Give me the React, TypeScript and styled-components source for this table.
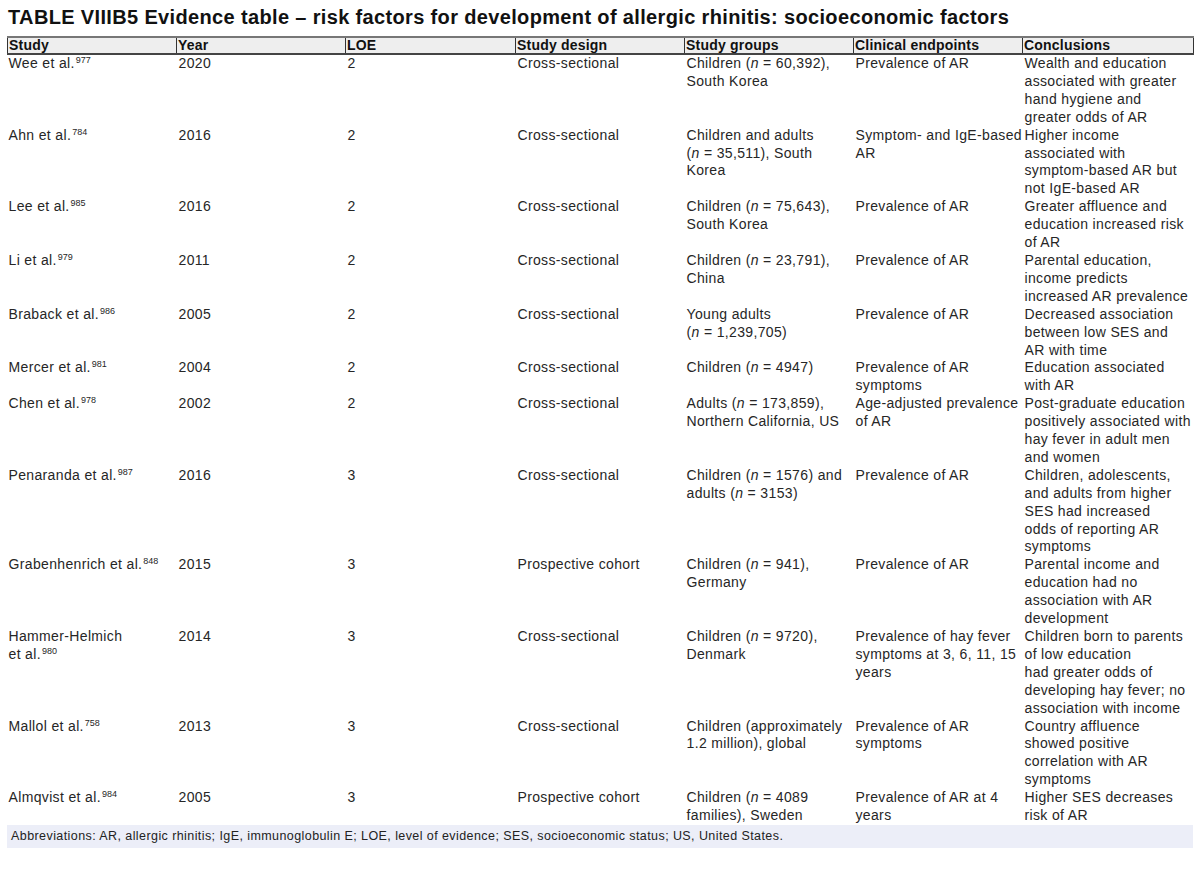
import React from "react";
import styled, { createGlobalStyle } from "styled-components";

const GlobalStyle = createGlobalStyle`
  html, body {
    margin: 0;
    padding: 0;
    background: #ffffff;
  }
  body {
    font-family: "Liberation Sans", Arial, sans-serif;
    color: #222222;
  }
`;

const Page = styled.div`
  width: 1200px;
  height: 872px;
  padding: 5px 7px 0 7px;
  box-sizing: border-box;
  display: flex;
  flex-direction: column;
`;

const Title = styled.h1`
  margin: 0 0 7px 1px;
  font-size: 20px;
  line-height: 24px;
  font-weight: bold;
  color: #111111;
  letter-spacing: 0.35px;
  white-space: nowrap;
`;

const Table = styled.table`
  width: 1186px;
  border-collapse: collapse;
  table-layout: fixed;
`;

const HeadCell = styled.th`
  background: #eeeeee;
  border-top: 2px solid #777777;
  border-bottom: 2px solid #444444;
  border-left: 1px solid #333333;
  border-right: 1px solid #333333;
  padding: 0 1px;
  height: 15px;
  font-size: 14px;
  line-height: 15px;
  font-weight: bold;
  text-align: left;
  color: #111111;
  letter-spacing: 0.2px;
  white-space: nowrap;
`;

const Cell = styled.td<{ $first?: boolean }>`
  vertical-align: top;
  padding: 0 1px 0 ${(p) => (p.$first ? "1px" : "2px")};
  font-size: 14px;
  line-height: 17.9px;
  color: #262626;
  letter-spacing: 0.35px;
  white-space: nowrap;
  overflow: visible;
`;

const Line = styled.div`
  white-space: nowrap;
`;

const Ref = styled.sup`
  font-size: 9px;
  line-height: 0;
  vertical-align: 5px;
  letter-spacing: 0;
  margin-left: 1px;
`;

const Footer = styled.div`
  width: 1186px;
  margin-top: 0;
  background: #eceef8;
  height: 23px;
  display: flex;
  align-items: center;
  padding-left: 4px;
  box-sizing: border-box;
  font-size: 12.5px;
  color: #222222;
  letter-spacing: 0.42px;
  white-space: nowrap;
`;

type Row = {
  study: string[];
  ref: string;
  year: string;
  loe: string;
  design: string;
  groups: string[];
  endpoints: string[];
  conclusions: string[];
};

const rows: Row[] = [
  {
    study: ["Wee et al."], ref: "977", year: "2020", loe: "2", design: "Cross-sectional",
    groups: ["Children (*n* = 60,392),", "South Korea"],
    endpoints: ["Prevalence of AR"],
    conclusions: ["Wealth and education", "associated with greater", "hand hygiene and", "greater odds of AR"],
  },
  {
    study: ["Ahn et al."], ref: "784", year: "2016", loe: "2", design: "Cross-sectional",
    groups: ["Children and adults", "(*n* = 35,511), South", "Korea"],
    endpoints: ["Symptom- and IgE-based", "AR"],
    conclusions: ["Higher income", "associated with", "symptom-based AR but", "not IgE-based AR"],
  },
  {
    study: ["Lee et al."], ref: "985", year: "2016", loe: "2", design: "Cross-sectional",
    groups: ["Children (*n* = 75,643),", "South Korea"],
    endpoints: ["Prevalence of AR"],
    conclusions: ["Greater affluence and", "education increased risk", "of AR"],
  },
  {
    study: ["Li et al."], ref: "979", year: "2011", loe: "2", design: "Cross-sectional",
    groups: ["Children (*n* = 23,791),", "China"],
    endpoints: ["Prevalence of AR"],
    conclusions: ["Parental education,", "income predicts", "increased AR prevalence"],
  },
  {
    study: ["Braback et al."], ref: "986", year: "2005", loe: "2", design: "Cross-sectional",
    groups: ["Young adults", "(*n* = 1,239,705)"],
    endpoints: ["Prevalence of AR"],
    conclusions: ["Decreased association", "between low SES and", "AR with time"],
  },
  {
    study: ["Mercer et al."], ref: "981", year: "2004", loe: "2", design: "Cross-sectional",
    groups: ["Children (*n* = 4947)"],
    endpoints: ["Prevalence of AR", "symptoms"],
    conclusions: ["Education associated", "with AR"],
  },
  {
    study: ["Chen et al."], ref: "978", year: "2002", loe: "2", design: "Cross-sectional",
    groups: ["Adults (*n* = 173,859),", "Northern California, US"],
    endpoints: ["Age-adjusted prevalence", "of AR"],
    conclusions: ["Post-graduate education", "positively associated with", "hay fever in adult men", "and women"],
  },
  {
    study: ["Penaranda et al."], ref: "987", year: "2016", loe: "3", design: "Cross-sectional",
    groups: ["Children (*n* = 1576) and", "adults (*n* = 3153)"],
    endpoints: ["Prevalence of AR"],
    conclusions: ["Children, adolescents,", "and adults from higher", "SES had increased", "odds of reporting AR", "symptoms"],
  },
  {
    study: ["Grabenhenrich et al."], ref: "848", year: "2015", loe: "3", design: "Prospective cohort",
    groups: ["Children (*n* = 941),", "Germany"],
    endpoints: ["Prevalence of AR"],
    conclusions: ["Parental income and", "education had no", "association with AR", "development"],
  },
  {
    study: ["Hammer-Helmich", "et al."], ref: "980", year: "2014", loe: "3", design: "Cross-sectional",
    groups: ["Children (*n* = 9720),", "Denmark"],
    endpoints: ["Prevalence of hay fever", "symptoms at 3, 6, 11, 15", "years"],
    conclusions: ["Children born to parents", "of low education", "had greater odds of", "developing hay fever; no", "association with income"],
  },
  {
    study: ["Mallol et al."], ref: "758", year: "2013", loe: "3", design: "Cross-sectional",
    groups: ["Children (approximately", "1.2 million), global"],
    endpoints: ["Prevalence of AR", "symptoms"],
    conclusions: ["Country affluence", "showed positive", "correlation with AR", "symptoms"],
  },
  {
    study: ["Almqvist et al."], ref: "984", year: "2005", loe: "3", design: "Prospective cohort",
    groups: ["Children (*n* = 4089", "families), Sweden"],
    endpoints: ["Prevalence of AR at 4", "years"],
    conclusions: ["Higher SES decreases", "risk of AR"],
  },
];

const headers = ["Study", "Year", "LOE", "Study design", "Study groups", "Clinical endpoints", "Conclusions"];
const widths = [169, 169, 170, 169, 169, 169, 171];

const renderText = (text: string) => {
  const parts = text.split("*n*");
  return parts.map((p, i) => (
    <React.Fragment key={i}>
      {i > 0 && <i>n</i>}
      {p}
    </React.Fragment>
  ));
};

const Lines: React.FC<{ lines: string[] }> = ({ lines }) => (
  <>
    {lines.map((l, i) => (
      <Line key={i}>{renderText(l)}</Line>
    ))}
  </>
);

export default function App() {
  return (
    <>
      <GlobalStyle />
      <Page>
        <Title>
          TABLE VIIIB5 Evidence table – risk factors for development of allergic rhinitis: socioeconomic factors
        </Title>
        <Table>
          <colgroup>
            {widths.map((w, i) => (
              <col key={i} style={{ width: w }} />
            ))}
          </colgroup>
          <thead>
            <tr>
              {headers.map((h) => (
                <HeadCell key={h}>{h}</HeadCell>
              ))}
            </tr>
          </thead>
          <tbody>
            {rows.map((r, idx) => (
              <tr key={idx}>
                <Cell $first>
                  {r.study.map((s, i) => (
                    <Line key={i}>
                      {s}
                      {i === r.study.length - 1 && <Ref>{r.ref}</Ref>}
                    </Line>
                  ))}
                </Cell>
                <Cell>{r.year}</Cell>
                <Cell>{r.loe}</Cell>
                <Cell>{r.design}</Cell>
                <Cell>
                  <Lines lines={r.groups} />
                </Cell>
                <Cell>
                  <Lines lines={r.endpoints} />
                </Cell>
                <Cell>
                  <Lines lines={r.conclusions} />
                </Cell>
              </tr>
            ))}
          </tbody>
        </Table>
        <Footer>
          Abbreviations: AR, allergic rhinitis; IgE, immunoglobulin E; LOE, level of evidence; SES, socioeconomic status; US, United States.
        </Footer>
      </Page>
    </>
  );
}
